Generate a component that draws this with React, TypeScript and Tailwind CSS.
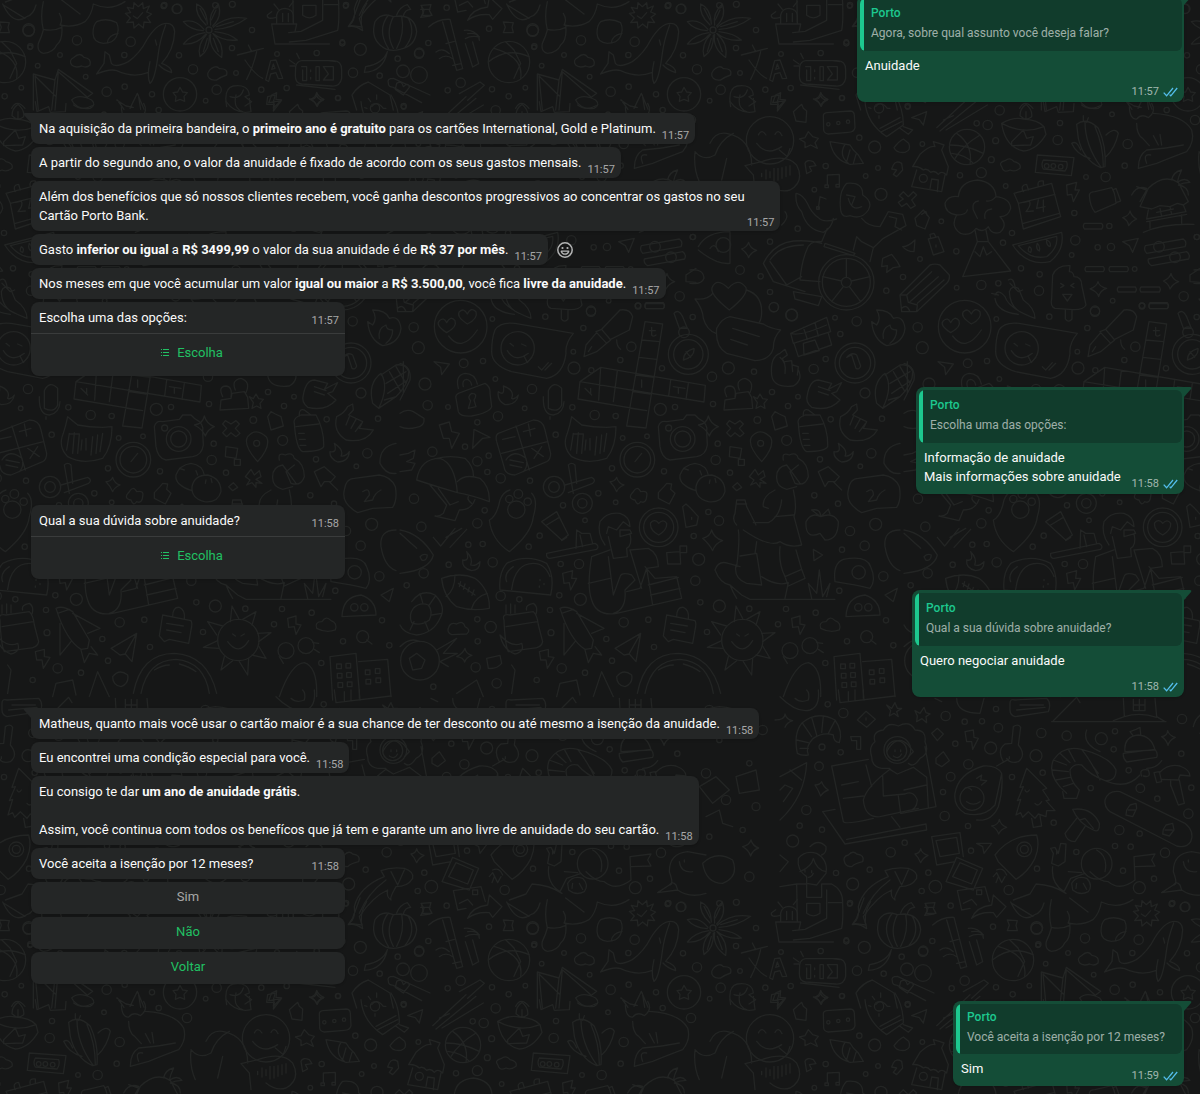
import type { ReactNode } from 'react'

// wallpaper drawings, each sheet is drawn at 3x and repeats every 504 x 898
type Sheet = { x: number; y: number; dots: number[][]; paths: string[] }

const SHEETS: Sheet[] = [
  {
    x: 0,
    y: 0,
    dots: [
      [86, 92, 17], [90, 142, 7], [180, 165, 7], [231, 121, 14], [113, 197, 7], [257, 230, 7], [64, 263, 7], [14, 289, 8],
      [320, 275, 14], [374, 260, 8], [373, 165, 8], [392, 125, 14], [491, 18, 8], [530, 27, 14], [537, 166, 8], [579, 208, 14],
      [456, 283, 8], [650, 269, 14], [617, 302, 7], [708, 219, 7], [696, 144, 8], [756, 90, 8], [697, 13, 9], [831, 162, 7],
      [784, 269, 8], [860, 264, 8], [950, 159, 8], [1037, 18, 7], [1027, 130, 8], [1081, 148, 18], [1059, 218, 14], [1014, 294, 8],
      [1193, 176, 8], [1139, 227, 8], [1257, 161, 14], [1211, 318, 8], [540, 283, 50], [1209, 214, 19], [1257, 225, 25],
      [15, 186, 62], [627, 90, 9],
    ],
    paths: [
      // body with sock
      'M130 5 Q120 50 130 90 Q125 110 115 130 Q110 155 130 160 Q160 158 170 135 Q190 120 185 75 M130 88 Q160 95 185 82 M178 40 Q190 60 180 75 Q220 85 255 65 Q275 45 280 12 Q330 35 375 5 M185 0 L240 42 M8 12 Q40 80 80 50 Q100 45 108 15 M10 15 L75 55',
      'M-47 186 Q10 140 75 170 M-30 145 Q60 170 50 235 M5 125 L30 150 L50 190 L30 235',
      // star badge
      'M376 40 L392 38 L382 22 L400 26 L402 8 L415 20 L428 8 L430 26 L448 18 L440 36 L455 42 L441 52 L452 68 L432 66 L430 84 L416 72 L402 84 L400 66 L380 68 L391 54 Z M400 48 L412 56 L428 38',
      'M290 65 Q320 52 350 68 Q360 90 348 112 Q340 130 310 130 Q280 128 279 100 Q279 75 290 65 M322 128 Q325 105 354 100',
      // whale
      'M290 222 L312 190 L315 155 L328 165 L334 190 Q345 205 385 185 Q420 160 440 120 Q470 70 500 70 Q522 70 524 95 Q522 150 485 190 Q515 200 515 218 Q490 210 477 195 M450 185 Q440 230 450 250 Q465 240 475 160 Q480 120 497 75 M290 222 Q330 205 350 212 Q400 235 443 218 M466 120 L470 135',
      'M215 195 Q205 180 222 172 Q240 155 252 172 Q275 175 270 195 Q260 205 245 198 Q225 205 215 195 Z M628 235 Q615 220 635 205 Q650 195 658 206 Q685 205 680 225 Q660 232 650 240 Q635 242 628 235 Z',
      // flower
      'M618 75 Q585 45 590 12 Q620 25 622 72 M632 75 Q625 40 655 12 Q668 50 638 78 M640 82 Q680 45 740 55 Q700 85 645 88 M645 95 Q690 100 712 120 Q670 125 638 100 M632 103 Q625 145 665 172 Q672 130 640 103 M620 103 Q590 135 600 170 Q630 150 628 105 M615 98 Q570 105 550 132 Q590 135 618 102 M612 88 Q585 55 550 65 Q570 90 610 92',
      'M600 25 L618 60 M648 30 L634 60 M700 65 L650 80 M610 155 L622 115 M655 155 L640 115',
      // cactus pot
      'M815 72 L825 132 L988 132 M815 72 H890 L885 95 M830 70 V45 Q835 25 855 25 Q878 28 880 45 V72 M848 40 V65 M865 40 V65 M828 52 Q800 60 802 45 L815 35 M822 12 L835 28 M880 5 L868 20',
      // bamboo
      'M1080 0 L1058 60 L1045 80 Q1065 75 1088 92 M1100 10 Q1075 50 1088 92',
      // pumpkin
      'M1180 50 Q1145 35 1125 65 Q1112 110 1140 135 Q1165 158 1200 148 Q1245 140 1250 95 Q1245 50 1200 48 Z M1165 45 Q1130 90 1165 145 M1180 50 Q1155 100 1180 145 M1205 48 Q1215 100 1190 145 M1225 55 Q1250 100 1215 142 M1190 45 Q1200 20 1222 14 L1232 28 Q1215 28 1210 48',
      'M1162 155 Q1150 190 1097 200 L1093 217 Q1150 215 1162 155 M1262 28 H1290 M1265 20 L1270 40 L1262 52 L1290 48',
      // books and sandwich
      'M100 330 V222 L165 240 L155 330 M115 330 L105 228 L168 290 M165 240 L175 208 L278 280 L262 292 L175 215 L165 330 M215 300 Q235 280 275 300 Q290 315 270 325 Q230 330 215 300 Z M35 325 Q50 295 75 325',
      'M350 300 L378 318 L400 322 M352 300 L372 328 M390 325 L412 280 L432 328 M415 285 L422 328',
      'M540 262 L548 276 L562 278 L552 289 L554 304 L540 298 L526 304 L528 289 L519 278 L533 276 Z',
      // language symbol
      'M712 165 L790 145 M745 135 L755 155 M770 155 Q760 200 740 238 M735 180 Q765 225 788 235 M797 240 L812 182 L828 180 L848 235 L835 236 L828 218 L812 222 L806 244 Z M815 208 L825 205 L820 192 Z',
      // alarm clock
      'M905 182 H1000 Q1025 182 1025 210 V235 Q1020 260 995 258 L905 252 Q885 250 886 225 L887 200 Q890 184 905 182 Z M890 255 L1005 268 M985 182 L1008 185 M868 180 L885 192 M890 160 L898 176 M870 198 H884 M905 200 H920 V242 H908 V210 M932 210 V215 M932 232 V237 M948 200 H958 V242 H948 Z M970 200 H1000 V240 H970 L985 222 Z',
      'M680 320 Q670 265 700 258 Q745 252 748 285 L735 290 L755 305 L735 318 M690 290 Q720 300 730 270 M815 285 L830 278 L828 298 L845 300 L820 325 L822 306 L806 308 Z',
      'M932 298 Q948 292 950 277 Q955 292 972 298 Q954 304 950 318 Q946 304 932 298 Z',
      'M1070 330 L1056 285 Q1075 255 1105 246 L1170 285 L1180 330 M1115 320 Q1130 300 1150 325 M1130 285 V298 M1105 295 L1112 305',
      'M1165 250 Q1160 235 1180 235 L1290 285 M1180 262 Q1165 262 1165 250 M1180 262 L1265 308 M1190 250 Q1205 240 1210 260 Q1225 245 1228 262 L1210 285 L1186 268 Z',
    ],
  },
  {
    x: 690,
    y: 95,
    dots: [
      [407, 213, 8], [564, 219, 7], [527, 243, 7], [373, 284, 7], [323, 401, 8], [508, 128, 8], [554, 156, 18], [697, 147, 7],
      [653, 36, 7], [456, 9, 7], [573, 298, 18], [754, 379, 7], [799, 469, 8], [690, 492, 7], [639, 546, 8], [589, 587, 8],
      [800, 578, 7], [874, 570, 14], [925, 565, 8], [993, 520, 8], [939, 443, 8], [966, 414, 8], [1156, 436, 14], [1145, 480, 7],
      [1153, 354, 8], [1188, 246, 7], [1247, 246, 14], [1304, 212, 8], [1313, 147, 14], [1430, 45, 8], [1266, 58, 7], [1110, 84, 8],
      [1103, 135, 14], [947, 273, 7], [874, 233, 15], [810, 241, 8], [904, 194, 9], [917, 137, 9], [893, 90, 14], [860, 85, 8],
      [929, 46, 14], [1049, 538, 8], [1047, 587, 14], [1258, 393, 8], [1223, 457, 8], [1263, 456, 11], [1334, 522, 7], [1268, 617, 7],
      [1481, 604, 14], [1356, 633, 9], [1215, 650, 14], [240, 440, 8], [212, 544, 8], [150, 525, 13], [8, 426, 8], [240, 591, 8],
      [251, 637, 14], [305, 660, 18], [1515, 75, 14], [1521, 426, 8], [240, 136, 71], [567, 40, 14], [831, 156, 53],
      [469, 562, 83], [469, 562, 72], [469, 562, 15], [700, 250, 12], [1070, 213, 7], [1090, 213, 7], [1112, 215, 7],
      [415, 88, 5], [445, 84, 5], [474, 80, 5], [1407, 455, 16], [1455, 487, 16], [100, 450, 22],
    ],
    paths: [
      'M400 62 Q400 55 410 53 L480 48 Q492 48 493 60 L495 98 Q492 112 475 112 L415 117 Q402 115 401 105 Z M310 50 L330 32 L335 28 L340 40 L350 48 L348 82 L318 78 Z M370 12 Q388 15 392 0 Q396 15 412 15 Q398 20 394 34 Q390 22 370 12 M245 5 L268 0 L262 20 L285 18 L262 48 L265 28 L242 28 Z M120 20 Q150 60 195 50 L190 10 M150 0 Q140 40 170 50',
      // laughing character
      'M205 120 Q215 100 228 120 M255 118 Q265 100 276 122 M200 145 Q230 185 275 155 M268 165 L292 185 L300 160 M15 170 Q40 200 75 180 Q90 135 130 115 M60 145 Q75 110 110 115 Q185 130 185 210 M15 172 Q10 220 28 260 M110 190 L95 255 M165 212 L215 200 Q290 175 320 210 Q345 260 300 285 Q270 295 240 270 M165 212 L190 240 L195 290 M215 235 V245 M228 225 V252 M240 230 V248 M252 220 V258 M264 220 V255 M276 218 V250 M288 215 V245 M300 212 V240',
      'M355 110 L368 125 L385 130 L375 143 L382 160 L362 150 L345 158 L345 142 L328 132 L345 128 Z M345 205 Q350 192 370 200 L378 212 L358 215 L365 228 L350 236 Z M610 210 Q618 195 635 205 L638 225 L620 245 L610 238 L620 225 L605 222 Z',
      // shell and rubber duck
      'M420 140 Q455 145 480 150 L490 165 L505 180 L520 205 L480 208 Q430 195 420 140 Z M465 148 Q445 180 475 205 M480 165 L470 200 M498 178 L490 205 M612 158 Q625 140 640 132 L656 145 Q665 165 645 172 Q620 175 612 158 Z',
      'M525 20 Q530 85 590 125 L640 90 Q640 40 615 0 M575 110 L635 80 M570 100 L630 68 M640 95 L668 105 L655 118 L630 100 M543 40 L536 38 M567 62 V70 M592 40 H600 M665 68 L710 50 L700 90 L688 74 Z M740 98 L840 5 M750 108 L870 10 M768 105 L892 30 M760 75 L790 62',
      // hut with bird
      'M668 215 L690 178 Q720 150 735 155 L730 140 L748 145 L762 150 L755 165 L775 215 L770 240 Q755 225 745 238 Q735 225 722 232 Q710 218 700 225 Q685 212 668 215 Z M680 225 L665 275 L755 290 L765 240 M720 280 L725 252 L745 255 L742 290',
      'M780 150 Q830 150 880 175 M800 115 Q850 150 840 208 M795 190 Q820 150 870 120 M785 175 Q830 180 850 205',
      'M935 215 Q925 202 945 197 Q960 185 972 200 Q995 205 990 220 Q975 232 960 225 Q940 235 935 215 Z M1042 180 L1152 188 L1144 242 L1036 232 Z M1060 195 L1130 200 Q1135 215 1125 228 L1060 222 Q1052 208 1060 195 Z',
      // bowl
      'M935 85 Q1000 120 1062 95 L1068 118 Q1040 165 1000 168 Q945 155 935 85 Z M935 85 Q970 65 1000 72 Q1045 75 1062 95 M990 62 Q990 40 1008 28 Q1028 45 1025 65 Q1008 80 990 62 M1008 70 V50 M965 140 L1000 105 L1010 130 L1030 125 L1022 150 L965 152 Z',
      // corn
      'M1160 88 Q1190 65 1225 100 Q1250 155 1245 215 L1232 218 Q1180 195 1165 130 Z M1185 80 Q1185 150 1232 215 M1215 95 Q1240 150 1240 215 M1145 145 Q1160 135 1172 165 M1145 145 Q1160 180 1200 190 M1248 120 Q1275 95 1285 115 Q1275 160 1248 185 M1180 62 V80 M1195 68 L1190 82 M1060 20 L1065 50 L1100 35 L1105 52 L1150 50 L1152 25 M1175 30 Q1200 50 1235 30',
      // hand with heart
      'M1318 35 Q1320 75 1340 72 Q1355 55 1375 68 Q1400 50 1385 25 M1390 55 Q1480 60 1505 105 Q1515 140 1490 170 Q1450 185 1400 205 L1345 220 Q1345 180 1370 165 Q1430 160 1480 150 M1340 85 Q1340 120 1358 130 L1378 152 M1390 122 L1405 150 M1410 118 L1415 150 M1370 205 Q1358 175 1382 180',
      // notes
      'M412 270 V240 L448 238 V268 M385 340 L390 305 L408 312 M405 270 h10 v8 h-10 z M438 268 h10 v8 h-10 z M380 335 h8 v8 h-8 z',
      // wheelchair racer
      'M320 295 Q340 300 352 325 Q365 355 385 368 Q400 385 440 372 M318 295 Q315 330 335 350 Q350 405 400 412 Q425 400 430 370 M452 345 Q445 290 470 265 Q520 260 518 300 Q550 320 535 345 Q515 375 480 362 Q455 370 452 345 M475 310 Q485 350 515 335 M470 300 L495 305 L485 330 M515 370 Q535 395 570 395 L595 350 L638 358 L648 392 L580 430 L550 458 L515 440 L500 425 L490 465 M598 365 L620 370 L615 395 L635 405 M405 445 L495 475 L490 482 L402 455 Z M412 400 L395 440 Q360 435 350 465 Q335 500 330 555 L390 560 M220 505 Q250 445 310 438 Q360 435 395 445 M240 495 Q270 450 340 450 M220 505 L250 560 L345 590 M240 500 L290 570 L335 545 M310 590 L395 605 L385 632 L315 612 Z M550 458 L540 500 M469 490 V547 M398 545 L455 558 M425 620 L460 575 M512 620 L478 575 M540 545 L484 558',
      'M640 290 L655 305 L670 290 L680 300 L665 315 L676 332 L662 340 L650 325 L635 335 L625 322 L640 312 L628 302 Z M675 370 L700 345 L718 368 L705 402 L680 392 Z M695 358 L708 350 L712 362 M638 455 Q655 455 675 435 L672 470 Q650 470 638 455 Z M715 432 L745 425 L762 470 L730 480 Z M722 430 L720 418 L732 415 L738 426 M738 450 V456',
      // tree and mountain
      'M800 360 Q765 355 765 325 Q775 300 805 305 Q810 260 862 255 Q915 262 918 305 Q960 310 962 340 Q955 365 930 365 Q955 390 930 412 Q905 420 895 395 Q880 415 858 400 Q840 425 812 415 Q780 395 800 360 Z M800 360 Q830 360 832 345 M918 305 Q905 320 890 318 M862 370 L850 345 Q845 320 865 318 M885 370 Q880 345 905 342 M855 405 L862 440 L818 545 L962 528 L895 440 L888 405 M862 440 H895 M855 470 L870 485 L880 455 L890 480 L905 470',
      // calendar
      'M972 295 L1085 265 L1112 365 L1000 402 L985 325 Z M985 325 L1095 298 M1000 385 L1108 355 M1000 290 Q990 270 1010 268 L1015 285 M1045 275 Q1040 255 1060 258 L1060 272 M1002 322 L1018 318 Q1025 330 1008 350 L1030 348 M1045 315 L1040 340 L1065 335 M1060 315 V350',
      'M1130 270 L1160 262 L1155 285 L1168 285 L1150 320 L1145 298 L1132 300 Z M1198 300 Q1200 290 1215 290 L1265 278 Q1275 290 1278 325 L1215 352 Q1200 335 1198 300 Z M1268 285 L1278 280 L1292 318 L1280 322 M1298 368 Q1318 362 1320 348 Q1325 365 1340 372 Q1325 378 1316 392 Q1314 376 1298 368 Z',
      'M1183 385 H1235 Q1242 393 1235 402 H1183 Q1177 393 1183 385 Z M1188 515 H1240 Q1246 522 1240 530 H1188 Q1182 522 1188 515 Z M1260 515 H1312 Q1318 522 1312 530 H1260 Q1254 522 1260 515 Z M1285 576 H1336 Q1342 583 1336 591 H1285 Q1279 583 1285 576 Z M1353 576 H1408 Q1414 583 1408 591 H1353 Q1347 583 1353 576 Z M1380 626 H1432 Q1438 633 1432 641 H1380 Q1374 633 1380 626 Z',
      // beach house
      'M1350 335 L1375 280 Q1420 235 1465 262 L1495 320 L1480 330 L1462 325 L1440 335 L1410 332 L1385 342 Z M1375 345 L1370 372 L1488 350 L1480 330 M1370 380 L1490 358 M1380 400 V380 M1475 385 V360 M1410 340 L1415 365 M1440 335 L1445 358 M1400 352 L1450 342 M1325 300 Q1340 270 1370 280 M1340 275 L1370 285 L1350 320 M1445 255 Q1450 230 1475 225 Q1465 245 1462 262 Q1485 245 1500 262 Q1480 262 1465 270 Q1495 275 1495 300 M1360 412 Q1420 385 1512 388',
      // melon
      'M968 450 L1115 412 Q1125 465 1080 500 Q1010 515 968 450 Z M985 452 L1100 424 Q1105 460 1070 485 Q1020 495 985 452 Z M1018 455 Q1028 460 1022 472 Q1010 470 1018 455 Z M1042 445 Q1052 455 1048 468 Q1036 462 1042 445 Z M1070 435 Q1085 442 1080 455 Q1068 450 1070 435 Z',
      'M1298 440 L1345 430 L1328 472 L1318 452 Z M1366 452 L1480 432 Q1492 440 1485 455 L1370 475 Q1360 465 1366 452 Z M1375 492 L1490 470 Q1502 478 1496 492 L1385 512 Q1372 505 1375 492 Z M1420 558 Q1440 550 1443 535 Q1448 555 1466 560 Q1448 566 1440 582 Q1436 566 1420 558 Z M1200 582 Q1220 575 1224 560 Q1228 576 1250 580 Q1230 586 1226 605 Q1222 590 1200 582 Z',
      // ice lolly
      'M1085 610 L1088 540 Q1100 510 1140 512 L1138 530 Q1150 530 1152 545 Q1175 545 1175 570 L1188 630 Q1180 645 1150 644 L1095 640 Q1080 635 1085 610 Z M1126 645 V672 Q1136 685 1146 672 V645 M1112 565 L1122 572 L1112 578 M1152 565 L1142 572 L1152 578 M1118 598 H1146 L1132 618 Z',
      // peppers
      'M915 600 Q925 580 945 605 Q955 640 1035 670 Q1035 640 1000 615 L985 580 Q965 570 958 590 Q960 640 1000 655 M915 610 Q920 650 985 658 M955 555 Q970 545 975 575 M960 565 L985 590 L998 585 M905 595 L925 600',
      // pencil
      'M635 650 L630 600 L720 510 Q735 505 750 510 L778 540 Q780 555 770 565 L680 650 Z M630 600 L650 600 L655 622 L682 630 L680 650 M650 600 L725 530 M682 625 L762 555 M660 620 L745 545 M635 640 Q650 625 660 650',
      'M578 490 L605 478 L622 500 L630 515 L610 518 L590 532 L592 512 L575 515 Z',
      // pizza and cake
      'M25 455 Q50 410 120 410 V505 Q80 510 25 465 M60 460 Q75 440 85 470 M155 462 Q170 458 176 442 Q180 460 200 466 Q182 472 176 488 Q170 472 155 462 Z M0 525 Q40 520 42 550 Q35 570 0 565 M285 350 Q300 365 275 390',
      // heart message
      'M15 612 Q55 615 68 595 M15 612 Q38 640 40 670 Q50 705 78 715 M170 585 Q215 600 215 650 Q215 670 208 682 M118 645 Q60 600 66 578 Q80 545 115 580 Q145 545 168 578 Q175 600 118 645 Z',
      'M1500 540 L1530 520 M1500 540 V560 L1530 562',
      // flame
      'M545 680 Q550 735 590 752 Q640 745 645 700 Q640 660 610 670 Q600 645 560 645 Q575 670 560 690 Z M580 730 Q575 700 600 690 Q600 705 620 705 Q620 730 600 745',
    ],
  },
  {
    x: 400,
    y: 300,
    dots: [
      [41, 82, 14], [55, 143, 18], [436, 50, 8], [277, 57, 7], [573, 32, 14], [550, 84, 8], [520, 155, 7], [522, 204, 18],
      [574, 211, 8], [661, 180, 8], [694, 140, 14], [786, 205, 8], [75, 252, 18], [191, 190, 13], [249, 183, 8], [286, 237, 7],
      [396, 267, 14], [374, 325, 7], [294, 349, 14], [144, 321, 7], [83, 316, 14], [232, 367, 8], [195, 440, 8], [97, 455, 14],
      [266, 467, 8], [232, 484, 14], [467, 404, 8], [517, 322, 8], [584, 345, 14], [647, 348, 8], [668, 414, 7], [741, 409, 7],
      [781, 328, 18], [825, 321, 8], [714, 17, 8], [878, 51, 8], [936, 230, 14], [939, 312, 8], [985, 204, 18], [1062, 215, 8],
      [1116, 276, 8], [1194, 290, 7], [1164, 318, 8], [1241, 207, 14], [1277, 177, 8], [1321, 102, 8], [1370, 64, 14], [1122, 21, 14],
      [1175, 45, 17], [1305, 53, 7], [1395, 279, 15], [1292, 358, 8], [1446, 356, 8], [1414, 460, 14], [1381, 499, 7], [1260, 478, 8],
      [1160, 421, 15], [1072, 360, 10], [953, 431, 8], [947, 480, 14], [792, 514, 8], [636, 505, 8], [595, 580, 8], [647, 607, 7],
      [489, 616, 8], [390, 542, 8], [302, 535, 14], [262, 516, 8], [254, 631, 8], [232, 670, 14], [42, 596, 14], [64, 680, 14],
      [419, 707, 8], [386, 740, 8], [555, 661, 7], [482, 792, 8], [537, 792, 14], [478, 886, 8], [541, 898, 18], [278, 787, 14],
      [248, 732, 8], [205, 734, 8], [146, 794, 8], [71, 820, 14], [20, 856, 8], [302, 888, 14], [358, 898, 8], [232, 958, 8],
      [272, 981, 17], [233, 1024, 8], [227, 1102, 14], [450, 930, 8], [453, 998, 9], [485, 1105, 14], [636, 1082, 8], [619, 1017, 8],
      [671, 967, 14], [745, 959, 8], [762, 1041, 8], [921, 996, 8], [901, 907, 8], [886, 842, 14], [958, 918, 18], [1048, 926, 8],
      [1134, 973, 8], [1158, 927, 8], [1247, 938, 8], [1318, 872, 8], [1394, 737, 14], [1326, 749, 8], [1350, 693, 14], [1427, 673, 18],
      [1314, 611, 8], [1243, 586, 8], [1450, 829, 14], [1341, 1024, 8], [1458, 961, 8], [1276, 1089, 8], [925, 636, 8], [957, 662, 14],
      [881, 708, 8], [896, 778, 18], [990, 518, 8], [1480, 1036, 8], [555, 1118, 8], [290, 1150, 14], [410, 1140, 8], [100, 1160, 8],
      [182, 80, 79], [353, 145, 50], [865, 163, 60], [865, 163, 44], [852, 97, 16], [1365, 189, 60], [1365, 189, 47], [848, 417, 37],
      [848, 417, 24], [806, 384, 9], [712, 479, 52], [712, 479, 40], [462, 561, 32], [462, 561, 16], [547, 610, 30], [547, 610, 14],
      [349, 629, 26], [328, 597, 11], [355, 582, 13], [383, 605, 11], [776, 682, 58], [776, 682, 45], [1027, 1020, 62], [1376, 817, 20],
      [1375, 922, 11], [1405, 922, 11], [1170, 1052, 24], [1230, 1037, 24], [1082, 430, 9], [1400, 1010, 18], [60, 1082, 58],
    ],
    paths: [
      'M140 98 Q105 75 118 62 Q132 50 140 68 Q152 45 165 62 Q172 80 140 98 Z M202 72 Q168 50 178 35 Q192 22 202 42 Q212 20 228 35 Q235 55 202 72 Z M146 108 Q185 160 232 90',
      // speech bubble
      'M285 90 Q300 65 345 70 L520 100 Q495 130 498 160 Q490 225 440 235 L335 215 Q275 195 275 155 Q275 115 285 90 Z M330 130 L340 138 M365 132 L378 138 M322 152 Q345 190 385 160 M372 168 L382 188 L395 172 M415 200 L425 210 L445 188 M435 210 L455 190',
      'M738 8 H790 Q797 18 790 26 H738 Q731 18 738 8 Z M552 170 L558 135 L590 98 L620 130 L590 155 Z M565 155 L575 140 M588 95 L605 88 L632 120 L620 130 M605 88 L660 30 Q690 25 698 50 L688 90 L632 118 M650 120 Q650 140 662 148',
      // crossword
      'M735 65 L788 72 L738 384 L680 378 Z M602 202 L596 300 M540 245 L912 306 L916 256 L602 202 Z M540 245 L534 297 L740 332 M652 212 L640 305 M725 120 L778 125 M717 172 L770 178 M708 225 L762 232 M700 275 L750 282 M692 325 L740 332 M812 240 L806 288 M865 250 L858 298 M755 82 V105 Q760 112 768 105 M748 92 H766 M555 265 L575 285 M572 265 V282 M820 260 L855 265 M835 265 V280 M725 240 V262',
      'M822 40 Q835 25 848 50 L862 85 L838 85 Z M850 180 Q850 155 882 145 Q885 170 850 180 Z M858 155 L872 172 M950 85 Q965 55 990 50 L1090 72 Q1110 85 1142 90 Q1120 110 1120 145 Q1110 180 1065 182 L980 160 Q945 140 950 85 Z M998 85 L1078 110 M992 118 L1042 135',
      // gift
      'M1172 100 L1280 52 L1292 95 L1180 130 Z M1182 130 L1195 170 L1295 135 L1285 100 M1210 82 L1222 118 M1245 68 L1255 108 M1210 130 L1245 120 L1258 152 L1212 165 Z M1172 100 Q1200 110 1280 75 M1355 165 L1368 205 Q1378 210 1382 198 L1370 165 Q1355 155 1340 172 Z',
      'M102 185 L148 192 L125 224 L122 202 Z M0 190 Q35 200 30 240 L0 300 M10 185 V280',
      // hands
      'M1115 225 Q1110 170 1140 160 L1155 148 L1162 165 L1148 175 M1140 172 Q1160 185 1155 220 M1155 185 L1175 182 L1178 215 M1178 195 L1195 200 L1192 225 M1195 210 Q1210 240 1180 258 Q1120 265 1115 225 M1222 285 Q1230 240 1255 240 L1295 250 L1285 268 L1310 255 L1325 248 L1310 275 L1295 280 L1320 300 Q1290 335 1235 322 Q1215 305 1222 285 M1255 260 L1290 272 M1255 275 L1285 285 M1322 350 Q1345 340 1355 320 L1370 312 L1372 330 L1358 345 L1400 365 L1390 385 L1432 390 Q1410 430 1350 420 Q1310 395 1322 350 M1360 350 L1350 375 M1380 358 L1365 385 M1395 372 L1378 395',
      // lock
      'M168 295 Q165 285 175 280 L255 250 Q272 260 270 280 L275 320 Q268 338 215 348 Q180 350 175 335 Z M175 265 Q165 225 195 220 Q225 220 232 252 M190 260 Q185 240 200 238 Q212 240 215 255 M215 280 Q200 290 212 302 L205 325 L228 320 L222 300 Q235 280 215 280 Z M310 258 Q345 270 335 295 Q345 300 355 285 Q350 315 315 314 Q290 300 295 275 Q315 290 310 258 Z M445 272 Q460 240 485 265 V315 Q475 340 445 325 Z M430 290 Q428 345 460 345 Q490 340 492 305 M450 350 V358',
      // podium
      'M972 330 L975 300 L1005 295 L1008 280 L1045 275 L1055 292 L1058 325 Z M980 290 Q965 260 990 258 Q1010 260 1005 290 M1018 270 Q1005 240 1035 235 Q1065 245 1050 278 M1060 290 L1072 296 L1080 282 L1088 296 L1102 298 L1092 310 L1095 325 L1082 318 L1068 325 L1072 308 Z',
      'M1430 310 Q1415 250 1455 220 Q1480 260 1448 325 Z M1455 225 L1500 195 Q1530 190 1538 215 Q1540 250 1500 290 L1448 325 M1480 215 L1515 275 M1500 200 L1530 250 M1470 250 L1530 215 M1475 280 L1535 240 M1465 300 L1500 290',
      'M0 340 Q20 325 40 335 L72 355 Q75 378 50 382 Q20 390 0 380 M118 375 L148 366 L155 395 L178 400 L155 445 L148 415 L130 415 Z M222 388 L270 412 L248 415 L218 445 Z M0 465 L25 460 L45 450 L40 475 L20 485 L45 490 L35 510 L0 515',
      // calculator
      'M295 400 L400 360 Q430 360 435 390 L452 460 Q452 480 440 485 L345 525 Q315 525 312 500 L290 425 Q285 405 295 400 Z M348 378 L388 510 M305 460 L442 425 M308 418 L345 410 M370 395 L405 385 M385 372 L392 408 M395 445 L430 470 M425 440 L402 475 M330 480 L370 488 M330 495 L365 502 M318 480 Q340 445 378 475 Q385 500 370 515',
      // cat mug
      'M515 350 L545 375 Q580 382 620 382 L648 380 Q648 440 620 475 Q560 495 515 470 Q485 440 502 400 Q510 375 515 350 Z M520 400 L512 450 M535 398 L530 460 M522 402 H550 L545 460 M558 420 L555 450 M570 415 V450 M590 410 L585 465 M605 405 L600 460 M620 400 L612 455 M705 485 L725 460',
      'M775 380 Q780 360 800 365 L850 358 L860 345 L885 345 L895 355 Q925 370 920 395 L922 435 Q918 465 890 470 L810 480 Q785 475 780 440 Z M895 375 Q920 372 925 348 Q932 372 955 380 Q935 388 928 408 Q920 388 895 375 Z M988 362 L1005 372 L1020 362 L1030 372 L1018 385 L1032 400 L1020 410 L1005 398 L992 410 L980 398 L992 385 L980 372 Z',
      'M1115 350 L1125 335 L1138 342 L1155 350 L1162 378 L1125 390 Z M990 440 L1025 445 L1020 475 L988 470 Z M1015 478 h18 v18 h-18 z M1085 485 Q1040 435 1055 410 Q1080 380 1112 412 Q1125 440 1085 485 Z M1195 370 Q1190 355 1215 345 L1260 345 Q1285 390 1283 440 Q1275 455 1220 455 Q1200 445 1195 370 Z M1210 348 Q1208 325 1225 330 L1245 345 M1200 380 L1268 372 M1208 400 H1225 M1210 418 H1228 M1212 436 H1230 M1315 430 Q1345 450 1335 468 Q1350 470 1360 455 Q1358 485 1325 486 Q1300 475 1302 455 Q1325 460 1315 430 Z',
      // mushrooms
      'M50 540 Q60 475 120 475 Q165 490 172 578 Q110 560 50 540 Z M110 475 Q150 465 195 475 Q222 500 220 530 M172 545 Q195 520 240 535 Q270 560 268 605 Q215 585 172 578 M90 555 L140 615 L130 640 Q120 650 105 648 L165 662 L178 630 Q215 630 225 598 M115 565 L150 615 L175 605 M215 610 Q200 600 205 590',
      'M505 495 Q515 485 525 495 L530 550 M505 495 L520 580 M495 555 L575 532 Q590 540 578 550 L505 578 M630 545 Q645 545 650 532 Q655 550 672 555 Q655 562 650 575 Q645 560 630 545 Z M700 575 Q712 555 722 575 Q745 570 740 590 Q738 612 722 605 Q712 620 705 600 Q680 595 700 575 Z M775 578 L792 560 L800 550 L815 552 L812 568 L825 580 L808 612 L775 595 Z',
      'M888 572 Q835 555 840 525 Q850 495 885 490 Q920 495 925 525 M888 560 Q895 525 935 525 Q975 535 975 575 Q965 610 925 605 Q885 595 888 560 Z M905 525 L900 512 M930 540 L928 550 M945 535 L948 548 M850 505 L865 510',
      // shield
      'M300 600 Q310 575 330 570 M395 580 Q415 600 400 650 Q395 700 328 755 Q275 720 268 660 Q290 650 300 600 M425 665 L470 635 L505 705 L485 720 Z M440 675 L478 652 M485 722 L500 712 M100 712 L122 738 L165 685 M138 712 L185 685 M150 742 L200 688',
      // toothbrush
      'M440 760 L585 730 Q600 738 590 748 L450 775 Q438 775 440 760 Z M528 745 L530 690 L545 700 L570 700 L578 730 M540 705 L548 740',
      // person with heart
      'M615 735 Q590 700 600 665 Q620 635 660 640 Q690 650 690 680 L670 665 L650 690 L625 680 L620 700 M660 690 H690 L695 700 L660 710 Z M690 700 Q698 735 680 745 L682 770 L640 775 L625 710 M690 750 L745 745 Q775 760 775 800 L740 805 L720 865 L680 875 M690 750 L725 865 M575 770 L630 750 M575 770 Q560 860 575 900 Q590 950 650 940 L845 895 L830 830 L765 835 L735 800 M625 770 L640 885 L660 830 Q665 815 695 825 L705 840 L675 870 Q680 930 640 940 M565 850 L630 835 M745 855 L835 832 M752 885 L840 865 M740 805 L758 915',
      'M776 705 Q748 690 752 668 Q765 655 776 670 Q790 655 800 670 Q802 690 776 705 Z M848 620 L858 612 L872 625 L895 650 L890 675 L858 682 Z M875 652 V658 M800 758 L840 755 L842 792 L803 792 Z M840 738 h20 v20 h-20 z M908 715 Q930 710 935 690 Q942 715 968 722 Q945 730 938 752 Q930 735 908 715 Z',
      // hiker with dog
      'M1130 530 Q1130 500 1160 495 L1200 550 M1130 530 Q1128 560 1160 568 L1190 560 M1150 480 Q1145 455 1168 465 Q1190 455 1195 475 Q1225 490 1225 530 Q1215 560 1185 550 L1170 515 L1195 495 M1125 570 Q1085 590 1090 620 L1105 625 M1145 600 Q1140 650 1105 668 L1060 668 M1180 570 Q1192 620 1182 650 L1205 735 Q1170 745 1140 725 Q1110 745 1030 690 M1125 650 L1180 645 M1010 675 Q995 660 1005 640 L1010 600 L1035 600 L1040 620 L1068 675 M1010 612 H1040 M1015 690 Q1020 720 1010 800 M1070 725 L1065 760 M1020 768 L1070 760 L1085 855 L1040 850 Q1000 835 1008 795 M1140 740 Q1135 790 1155 830 L1205 808 L1188 750 M1155 830 L1165 858 L1215 835 L1205 808 M945 810 Q955 780 985 790 L1020 800 M945 810 Q960 850 990 855 L1025 885 L1050 898 H1305 M1085 830 Q1130 860 1165 848 L1155 895 M990 855 Q1000 880 1010 895 M1235 895 L1225 850 L1250 880 L1258 810 L1268 890 L1290 850 L1280 890',
      'M1260 700 Q1215 720 1218 665 Q1235 635 1262 650 Q1300 635 1315 665 Q1315 720 1275 720 Z M1262 650 L1235 630 Q1262 625 1262 650 L1285 628 L1290 642 M1052 525 L1065 508 L1075 525 L1090 512 L1095 530 L1080 538 L1098 550 L1080 548 L1080 562 L1068 548 L1052 555 L1062 540 L1048 530 Z M1255 515 L1285 500 L1318 530 L1305 545 L1285 545 L1275 560 Z M1300 545 L1325 570 M998 560 L1012 548 L1025 562 L1010 572 Z',
      'M1345 570 Q1350 535 1375 535 L1450 525 Q1485 530 1498 560 Q1505 600 1490 622 L1430 625 L1385 638 Q1335 610 1345 570 M1400 575 Q1420 560 1420 585 L1405 605 L1430 600 Q1435 580 1455 570',
      // bird, ball, taco
      'M0 690 Q60 700 100 765 Q90 810 0 820 M60 770 Q70 760 82 765 Q80 785 65 780 Z M0 700 L50 745 M200 755 Q220 775 212 795 Q225 800 240 785 Q240 810 215 812 Q185 805 188 780 Q210 785 200 755 Z',
      'M125 835 Q180 815 225 835 Q270 870 268 925 Q215 935 170 920 Q130 890 125 835 Z M138 890 Q165 870 165 825 M215 925 Q225 890 262 880 M175 850 L225 885 M182 845 L178 860 M195 852 L190 868 M208 862 L204 876 M222 870 L216 886 M300 870 Q295 820 320 790 Q380 760 440 790 Q465 830 452 885 Z M335 868 Q345 790 400 790 Q435 790 450 830 M320 845 Q310 820 340 800 M420 838 v4 M432 850 v4 M418 858 v4 M488 820 L518 812 L515 835 L530 835 L512 870 L508 848 L492 850 Z',
      // life ring
      'M35 905 Q65 865 105 885 Q140 920 120 955 Q100 1000 50 1005 Q10 1000 0 975 M40 925 Q60 905 85 915 Q100 935 88 960 Q60 980 35 968 Q25 945 40 925 Z M60 880 L68 908 M105 890 L88 915 M125 940 L95 945 M85 990 L75 965 M30 990 L42 965',
      'M145 985 Q150 965 170 972 Q190 960 195 980 Q215 990 200 1002 L155 1004 Q140 998 145 985 Z M170 1070 Q190 1060 195 1045 Q198 1062 216 1066 Q198 1072 194 1086 Q190 1072 170 1070 Z M260 1075 L300 1066 L305 1090 Q290 1108 265 1105 Z M110 1050 L170 1015 L130 1060 L172 1060 L120 1085 L145 1100 M28 1075 L50 1060 L75 1080 L65 1105 L38 1110 Z M0 1040 Q30 1010 60 1025',
      // robot suitcase
      'M312 960 Q305 940 330 945 L400 935 Q412 945 415 975 L428 1025 Q425 1045 395 1045 L325 1055 Q315 1035 312 960 Z M318 980 L412 965 M318 915 V940 M332 912 V940 M345 915 V938 M380 930 Q375 915 400 910 Q415 920 408 942 M300 1005 Q310 1050 345 1062 Q375 1055 365 1030 Q335 1045 300 1005',
      // rocket
      'M480 925 Q500 915 530 935 L580 1020 L575 1045 L555 1048 Q510 1020 480 925 Z M485 940 L520 928 M530 940 L612 985 L575 1000 M492 970 L492 1065 L525 1025 M555 1050 L565 1088 L580 1060 L605 1065 L585 1040 M418 1055 L445 1048 L445 1070 L462 1072 L442 1105 L438 1080 L422 1080 Z M645 1045 L722 1000 L708 1085 L688 1062 L672 1065 Z M722 1000 L688 1060',
      // portal
      'M800 945 L885 962 Q890 970 885 990 L878 1030 L820 1018 L805 1025 L790 1008 Z M830 950 Q830 920 850 922 Q868 930 865 955 M812 970 L862 978 M812 990 L855 998 M712 1180 Q735 1060 835 1060 Q935 1065 962 1180 M735 1180 Q755 1080 840 1078 Q925 1085 940 1180 M775 1110 Q800 1095 820 1095 M850 1092 Q880 1100 900 1115',
      // sun
      'M1003 965 L1008 918 L1028 955 M1040 958 L1080 935 L1068 975 M1085 1000 L1125 998 L1088 1025 M1088 1038 L1110 1075 L1068 1065 M1058 1075 L1055 1125 L1030 1085 M1010 1082 L975 1110 L985 1070 M968 1045 L922 1042 L965 1022 M962 1005 L935 965 L980 978 M1010 1002 L1018 1008 M1035 1008 L1045 1002 M995 1025 Q1028 1070 1058 1022',
      'M1175 955 L1200 948 L1200 972 L1215 975 L1200 1003 L1195 980 L1178 982 Z M1262 985 Q1255 965 1278 965 Q1290 945 1305 962 Q1325 968 1318 990 Q1290 1000 1262 985 Z M1150 1070 L1162 1090 M1250 1028 L1268 1030 M1255 1048 L1270 1058 M1412 1020 L1428 1032 M1305 845 Q1298 790 1330 778 Q1400 765 1412 800 Q1430 840 1410 865 Q1370 855 1305 845 M1338 950 Q1340 890 1395 885 Q1440 900 1440 945 Z M1240 748 L1268 765 L1242 782 Z M1455 885 L1492 865 L1480 905 Z',
      // buildings
      'M1310 1200 L1302 1070 L1380 1060 L1392 1200 M1388 1085 L1475 1078 L1485 1190 M1322 1092 h14 v14 h-14 z M1350 1090 h14 v14 h-14 z M1324 1120 h14 v14 h-14 z M1352 1118 h14 v14 h-14 z M1326 1148 h14 v14 h-14 z M1354 1146 h14 v14 h-14 z M1408 1110 h14 v14 h-14 z M1438 1106 h14 v14 h-14 z M1410 1138 h14 v14 h-14 z M1440 1134 h14 v14 h-14 z M1150 1190 Q1185 1090 1225 1088 Q1265 1100 1262 1190 M1500 430 Q1450 440 1452 490 Q1470 525 1500 520 M1500 690 Q1450 690 1455 740 Q1465 800 1500 812',
      'M580 1190 L605 1115 L640 1190 M650 1130 Q670 1105 695 1125 Q700 1150 675 1160 Q650 1155 650 1130 M335 1180 L345 1110 L335 1095 M470 1190 L480 1150 L530 1140 L540 1185 M170 1180 L230 1140 L250 1190',
    ],
  },
  {
    x: 780,
    y: 690,
    dots: [
      [190, 69, 14], [143, 43, 8], [126, 171, 9], [182, 187, 8], [117, 229, 13], [79, 360, 14], [59, 407, 8], [126, 419, 8],
      [38, 453, 18], [168, 549, 8], [218, 582, 18], [210, 639, 8], [269, 539, 8], [332, 487, 14], [374, 458, 8], [445, 548, 8],
      [425, 603, 8], [199, 750, 7], [512, 647, 8], [494, 378, 14], [564, 408, 8], [489, 306, 8], [512, 260, 13], [565, 223, 14],
      [526, 161, 8], [497, 78, 14], [554, 95, 8], [606, 94, 8], [648, 57, 8], [655, 113, 13], [632, 174, 18], [696, 261, 8],
      [768, 197, 18], [788, 248, 8], [784, 129, 14], [860, 137, 14], [964, 146, 18], [1005, 124, 8], [1001, 178, 8], [932, 294, 8],
      [1046, 241, 8], [1081, 295, 13], [1132, 326, 8], [1018, 420, 14], [1079, 431, 8], [1005, 468, 8], [1052, 470, 8], [1155, 488, 14],
      [1122, 566, 8], [1029, 542, 8], [889, 486, 8], [821, 398, 8], [771, 536, 8], [573, 482, 8], [686, 600, 14], [639, 710, 8],
      [770, 713, 18], [775, 763, 8], [1177, 639, 8], [1216, 650, 14], [1204, 191, 8], [1206, 87, 14], [1225, 371, 14], [1234, 293, 8],
      [457, 753, 8], [430, 782, 14], [466, 590, 19], [1078, 593, 18], [515, 895, 8], [554, 872, 14], [648, 892, 8],
      [733, 478, 22], [733, 478, 12], [950, 521, 46], [576, 325, 36], [1300, 60, 14], [1330, 150, 8], [1290, 250, 14], [1420, 220, 8],
      [1350, 330, 14], [1400, 420, 8], [1300, 440, 8], [1440, 350, 12], [1380, 100, 8], [1460, 120, 14], [1420, 560, 14], [1330, 640, 8],
      [352, 180, 40], [350, 182, 30],
    ],
    paths: [
      'M0 20 Q50 70 90 60 Q120 50 115 0 M45 25 Q60 40 85 30 Q90 10 80 0 M175 0 L180 38 L345 18 M205 5 V32 M225 0 V30 M250 0 V25 M320 45 L335 55 L345 38 L352 55 L365 55 L350 65 L355 80 L342 70 L328 78 L332 62 Z M405 62 L420 70 L432 52 L438 68 L450 72 L438 80 L440 98 L426 86 L410 95 L412 78 Z M232 90 L258 64 L286 88 L260 112 Z M258 84 v6 M-15 90 Q15 90 15 72 Q20 90 38 92 Q20 98 15 112',
      // croissant
      'M52 190 Q40 130 65 100 Q110 60 165 90 Q190 125 178 158 Q160 155 160 135 Q130 125 100 145 Q75 170 85 195 Q65 198 52 190 M68 100 L95 140 M95 82 L110 135 M130 78 L125 128 M165 92 L145 130 M50 150 L85 158 M60 175 L85 175 M212 140 H242 V178 L230 178 V152 L215 152 Z',
      'M0 260 L80 218 Q75 320 0 390 M30 240 L65 270 M0 300 L15 285 L38 295 L10 335 M105 285 Q120 285 125 275 Q130 290 145 300 Q130 305 122 318 Q115 300 105 285 Z',
      // laptop caller
      'M275 200 Q265 170 285 155 Q275 125 310 120 Q325 95 355 108 Q390 90 405 120 Q440 120 435 155 Q450 190 420 205 Q400 235 385 220 M275 200 Q275 230 305 235 L330 235 M320 185 Q350 130 385 165 L400 185 L385 200 M345 180 v5 M362 180 v5 M340 198 Q355 210 365 192 M155 228 L265 208 M435 170 L468 350 L365 370 M155 228 L190 395 Q195 405 280 385 M330 238 L352 252 L400 232 L440 262 L445 352 M330 238 Q260 290 250 330 Q255 385 300 380 L415 355 M308 255 L310 318 L375 312 M372 300 L440 285 M375 312 Q400 300 412 330 Q410 360 385 362 M355 318 L362 370 M258 225 L275 290 M185 285 L235 275 M190 325 L250 318 M128 365 L165 358 M128 365 L195 462 L440 420 L438 402 L200 448 M335 380 L360 412',
      'M455 130 L472 115 L490 132 L472 152 Z M468 205 L490 185 L508 212 L485 230 L468 220 Z M555 125 L580 120 L582 142 L595 145 L578 178 L575 155 L560 155 Z M530 25 Q530 70 600 70 L612 25 M465 25 L485 35 M690 40 Q690 25 705 30 L800 25 Q815 40 805 65 L705 80 Q690 75 690 60 Z M720 45 H790 M710 60 L795 52 M815 95 H1158 M820 92 L890 22 L900 38 M1030 25 L1033 80 L1000 92 M1125 25 L1130 80 L1155 95 M1060 28 V62 H1095 V28 M1078 28 V62 M1060 45 H1095 M1033 80 Q1080 65 1130 82',
      // eggplant pan
      'M525 310 Q535 250 610 228 Q650 225 665 250 Q655 300 645 345 Q610 385 555 370 Q520 350 525 310 Z M665 250 Q670 300 655 350 Q635 395 590 390 M650 228 L685 208 M670 215 Q650 180 675 162 L695 160 L700 110 Q715 100 722 112 L715 165 Q740 195 715 215 Q690 222 680 205 M688 200 v6 M590 265 L605 255 L602 270 L620 272 L605 285 M550 300 Q560 285 575 300 M560 335 Q580 350 600 335',
      // pine tree
      'M740 235 L800 295 L788 300 L808 330 L798 332 L825 362 L800 362 L798 380 L775 372 L765 385 L745 365 L728 382 L722 368 L708 375 L722 328 L712 332 L730 290 L720 292 Z M755 385 L760 412 L785 408 L780 378 M735 300 Q740 312 748 300 M765 340 Q775 352 785 335',
      // shrimp, snake
      'M860 310 Q800 260 820 210 Q850 165 905 178 Q935 215 960 270 M905 178 Q990 200 1008 240 Q1008 275 975 272 Q930 255 905 225 Q880 220 870 240 Q870 265 885 285 L898 300 L890 325 L852 325 L848 305 M820 210 L860 225 M840 190 L870 218 M865 178 L885 215 M818 240 L865 245 M828 270 L870 262 M850 290 L880 280 M920 120 Q905 160 960 185 M940 230 L955 250 M975 272 Q1040 300 1080 255 M635 408 Q655 405 658 388 Q662 405 680 412 Q662 418 656 432 Q650 415 635 408 Z',
      // hat and hammer
      'M1035 185 Q1030 140 1075 135 Q1115 138 1125 180 Z M1030 190 L1125 178 Q1135 190 1130 202 L1040 216 Q1028 205 1030 190 M1060 138 L1050 125 L1068 118 L1080 112 L1082 132 M1145 140 Q1162 138 1163 122 Q1168 138 1186 142 Q1168 150 1164 166 Q1160 150 1145 140 Z M1085 258 Q1075 235 1105 240 Q1115 265 1090 258 M1100 235 Q1130 235 1145 212 M1122 248 L1138 245 L1145 275 L1130 278 Z M1138 248 Q1165 220 1200 228 Q1230 240 1230 258 L1200 255 L1195 270 L1145 268 M1172 285 L1195 345 L1213 340 L1198 270 M1172 270 V288',
      // skateboard
      'M975 330 Q985 300 1020 305 L1215 400 Q1245 425 1232 455 Q1220 475 1190 468 L990 365 Q972 350 975 330 Z M1050 345 L1068 340 L1070 355 L1058 380 L1038 375 L1040 360 Z M1158 405 L1178 400 L1182 420 L1168 438 L1148 432 L1150 418 Z M1045 360 h20 M1155 420 h22',
      // mushroom, photos
      'M878 358 Q935 350 958 400 Q960 430 940 420 Q895 400 878 358 Z M890 385 L855 430 Q860 455 885 455 L915 410 M900 390 L915 385 L940 415 M455 440 L540 428 L550 500 M455 440 L470 525 L525 515 M468 452 L530 442 L538 490 L480 500 Z M530 502 L608 535 L580 600 L498 575 Z M540 518 L592 540 L575 582 L518 560 Z M590 460 L635 460 L612 490 L608 470 Z M405 492 Q420 490 422 476 Q426 492 444 496 Q428 504 422 518 Q416 502 405 492 Z M532 602 L615 590 L628 635 M532 602 L545 660 L570 655 M550 640 L575 628 L590 645 M590 600 h15 v14 h-15 z M575 685 Q590 650 635 645 L640 615 L678 650 L650 682 L640 668 Q600 665 575 685 Z',
      // rocket
      'M645 495 Q690 435 770 435 Q780 470 765 505 Q745 545 708 568 L655 515 Z M655 515 L708 568 M650 540 Q670 530 680 555 M640 560 L650 548 L665 578 L675 560 M648 578 L655 560',
      // astronaut
      'M820 490 L812 475 L825 472 L835 490 L842 460 L858 462 L855 515 L835 528 L815 520 Z M830 480 v12 M818 530 Q812 580 852 605 L872 565 L915 550 M865 545 L905 548 M875 580 Q890 555 920 565 Q940 585 925 605 Q900 618 878 600 Z M890 580 L888 595 M910 580 L920 598 M950 480 Q985 500 975 545 M930 545 Q960 575 985 575 Q1020 605 1065 570 L1062 500 L1125 492 L1115 510 L1125 528 L1065 530 M858 610 Q820 585 768 582 L750 612 L700 630',
      'M1180 545 Q1180 490 1235 485 L1290 495 M1180 545 Q1195 585 1180 585 L1145 608 L1205 600 M1180 585 Q1190 572 1200 585 L1205 600 Q1240 625 1290 610 M1210 515 Q1215 550 1250 545 M1225 510 v6',
      // barista
      'M80 560 Q50 540 55 505 Q75 480 110 490 Q145 510 138 550 L110 585 L80 580 Z M90 470 Q115 445 138 470 Q140 490 125 495 M60 545 Q95 530 100 505 Q110 540 138 545 M75 540 v6 M95 542 v6 M85 562 Q95 562 100 550 M50 582 H80 V622 H125 V582 L155 582 Q190 600 188 640 Q190 690 185 715 L90 745 L40 750 M50 582 L52 690 M0 590 L50 582 M80 640 H120 V670 Q100 685 80 670 Z M140 600 V685 L75 718 L38 722 M145 638 H188 M0 495 L25 515 L0 545 M195 520 Q185 500 205 495 Q220 480 230 492 Q255 495 248 515 Q225 520 215 530 Q200 530 195 520 Z',
      // dolphin
      'M315 542 Q345 530 385 535 Q415 545 410 565 Q395 590 360 590 Q340 625 345 630 Q330 620 335 600 Q290 620 250 680 L258 705 L220 700 Q240 685 235 650 Q250 590 325 560 Z M345 545 L365 585 L385 540 M250 670 Q275 610 330 570 M435 640 L465 638 L460 655 L468 670 L438 670 L444 655 Z',
      // bamboo
      'M458 705 Q485 680 522 682 L560 830 L542 835 L500 690 M510 755 L535 748 M530 820 L555 815 M568 755 L590 825 L608 815 L590 750 M565 715 Q590 710 610 735 Q585 730 568 740 M575 725 Q610 720 610 745 M480 780 Q500 765 520 785 M490 800 Q510 785 530 800 M682 690 L712 692 L708 706 L712 722 L682 722 L688 706 Z M550 905 L612 870 L625 880 L575 925',
      'M1240 110 Q1250 60 1330 50 Q1420 55 1440 130 M1260 130 Q1290 80 1340 75 M1270 290 L1320 260 L1360 300 L1310 340 Z M1380 260 L1440 240 L1450 300 L1390 310 Z M1280 520 Q1320 480 1370 510 Q1390 560 1340 580 Q1290 580 1280 520 Z M1290 380 L1330 360 L1340 400 L1370 410 M1400 470 Q1420 465 1425 450 Q1430 468 1448 474 Q1430 480 1424 498 Q1418 480 1400 470 Z',
    ],
  },
]

function Wallpaper() {
  return (
    <svg className="absolute inset-0 h-full w-full text-[#232524]" aria-hidden="true">
      <defs>
        <g id="doodles" fill="none" stroke="currentColor" strokeWidth="4" strokeLinecap="round" strokeLinejoin="round">
          {SHEETS.map((s) => (
            <g key={`${s.x}-${s.y}`} transform={`translate(${s.x} ${s.y}) scale(0.33333)`}>
              {s.dots.map(([cx, cy, r], i) => (
                <circle key={i} cx={cx} cy={cy} r={r} />
              ))}
              {s.paths.map((d, i) => (
                <path key={i} d={d} />
              ))}
            </g>
          ))}
        </g>
      </defs>
      {[-1008, -504, 0, 504, 1008].map((x) =>
        [-898, 0, 898].map((y) => <use key={`${x}.${y}`} href="#doodles" x={x} y={y} />),
      )}
    </svg>
  )
}

function Checks() {
  return (
    <svg width="15" height="10" viewBox="0 0 15 10" fill="none" stroke="#53bdeb" strokeWidth="1.3" className="ml-1 inline-block" aria-hidden="true">
      <path d="M0.7 5.6 L3.6 8.8 L10 1" />
      <path d="M6.6 7.6 L7.8 8.8 L14.2 1" />
    </svg>
  )
}

function Time({ children, read, className = 'mt-[9px]' }: { children: string; read?: boolean; className?: string }) {
  return (
    <span className={`float-right ml-1.5 text-[11px] leading-[15px] whitespace-nowrap text-white/60 ${className}`}>
      {children}
      {read && <Checks />}
    </span>
  )
}

function Tail({ className }: { className: string }) {
  return (
    <svg width="8" height="12" viewBox="0 0 8 12" className={`absolute top-0 ${className}`} aria-hidden="true">
      <path d="M0 0 H6 Q8 0 7 2 L0 10 Z" fill="currentColor" />
    </svg>
  )
}

function Incoming({ children, time, tail }: { children: ReactNode; time: string; tail?: boolean }) {
  return (
    <div className={`relative flow-root w-fit max-w-[65%] rounded-lg bg-[#242626] pt-1.5 pr-1.5 pb-px pl-2 shadow-sm ${tail ? 'rounded-tl-none' : ''}`}>
      {tail && <Tail className="right-full -scale-x-100 text-[#242626]" />}
      {children}
      <Time>{time}</Time>
    </div>
  )
}

function ListMessage({ text, time }: { text: string; time: string }) {
  return (
    <div className="w-[314px] rounded-lg bg-[#242626] shadow-sm">
      <div className="flow-root pt-1.5 pr-1.5 pb-[5px] pl-2">
        {text}
        <Time className="mt-[5px]">{time}</Time>
      </div>
      <button className="flex h-[43px] w-full items-center justify-center gap-2 border-t border-white/10 pb-1.5 pl-2 text-[#21c063]">
        <svg width="8" height="8" viewBox="0 0 8 8" stroke="currentColor" strokeWidth="1" aria-hidden="true">
          <path d="M0 1.5 H1 M2 1.5 H8 M0 4.5 H1 M2 4.5 H8 M0 7.5 H1 M2 7.5 H8" />
        </svg>
        Escolha
      </button>
    </div>
  )
}

type OutgoingProps = {
  quote: string
  time: string
  width: string
  stacked?: boolean
  quoteSize?: string
  className?: string
  children: ReactNode
}

function Outgoing({ quote, time, width, stacked, quoteSize = 'h-[53px] pt-[5px]', className = '', children }: OutgoingProps) {
  return (
    <div className={`relative self-end rounded-lg rounded-tr-none bg-[#144d37] py-[3px] shadow-sm ${width} ${className}`}>
      <Tail className="left-full text-[#144d37]" />
      <div className="mr-0.5 ml-[3px] flex overflow-hidden rounded-md bg-[#113c2c] text-xs">
        <span className="w-1 shrink-0 bg-[#1dc88f]" />
        <div className={`pl-[7px] ${quoteSize}`}>
          <p className="leading-5 font-medium text-[#1dc88f]">Porto</p>
          <p className="leading-5 text-white/60">{quote}</p>
        </div>
      </div>
      <div className="flow-root pt-[5px] pr-1.5 pl-2">
        {stacked ? <p>{children}</p> : children}
        <Time read>{time}</Time>
      </div>
    </div>
  )
}

export default function App() {
  return (
    <main className="relative min-h-screen overflow-hidden bg-[#161717] font-[Roboto,sans-serif] text-[13px] leading-[19px] text-[#fafafa]">
      <Wallpaper />

      <div className="relative flex flex-col gap-[11px] pr-4 pb-2 pl-[31px]">
        <Outgoing quote="Agora, sobre qual assunto você deseja falar?" time="11:57" width="w-[327px]" stacked className="-mt-[5px]">
          Anuidade
        </Outgoing>

        <div className="flex flex-col gap-[3px]">
          <Incoming time="11:57" tail>
            Na aquisição da primeira bandeira, o <b>primeiro ano é gratuito</b> para os cartões International, Gold e Platinum.
          </Incoming>
          <Incoming time="11:57">
            A partir do segundo ano, o valor da anuidade é fixado de acordo com os seus gastos mensais.
          </Incoming>
          <Incoming time="11:57">
            Além dos benefícios que só nossos clientes recebem, você ganha descontos progressivos ao concentrar os gastos no seu
            Cartão Porto Bank.
          </Incoming>
          <div className="flex items-center">
            <Incoming time="11:57">
              Gasto <b>inferior ou igual</b> a <b>R$ 3499,99</b> o valor da sua anuidade é de <b>R$ 37 por mês</b>.
            </Incoming>
            <button aria-label="Reagir" className="ml-2 text-[#b4b5b5]">
              <svg width="18" height="18" viewBox="0 0 18 18" fill="none" stroke="currentColor" strokeWidth="1.5">
                <circle cx="9" cy="9" r="7.2" />
                <circle cx="6.5" cy="7" r="1.1" fill="currentColor" stroke="none" />
                <circle cx="11.5" cy="7" r="1.1" fill="currentColor" stroke="none" />
                <path d="M5.2 10.2 H12.8 Q11.8 13.2 9 13.2 Q6.2 13.2 5.2 10.2 Z" strokeWidth="1.2" strokeLinejoin="round" />
              </svg>
            </button>
          </div>
          <Incoming time="11:57">
            Nos meses em que você acumular um valor <b>igual ou maior</b> a <b>R$ 3.500,00</b>, você fica <b>livre da anuidade</b>.
          </Incoming>
          <ListMessage text="Escolha uma das opções:" time="11:57" />
        </div>

        <Outgoing quote="Escolha uma das opções:" time="11:58" width="w-[268px]">
          Informação de anuidade
          <br />
          Mais informações sobre anuidade
        </Outgoing>

        <ListMessage text="Qual a sua dúvida sobre anuidade?" time="11:58" />

        <Outgoing quote="Qual a sua dúvida sobre anuidade?" time="11:58" width="w-[272px]" stacked>
          Quero negociar anuidade
        </Outgoing>

        <div className="flex flex-col gap-[3px]">
          <Incoming time="11:58" tail>
            Matheus, quanto mais você usar o cartão maior é a sua chance de ter desconto ou até mesmo a isenção da anuidade.
          </Incoming>
          <Incoming time="11:58">Eu encontrei uma condição especial para você.</Incoming>
          <Incoming time="11:58">
            Eu consigo te dar <b>um ano de anuidade grátis</b>.
            <br />
            <br />
            Assim, você continua com todos os benefícos que já tem e garante um ano livre de anuidade do seu cartão.
          </Incoming>
          <div className="flex w-[314px] flex-col gap-[3px]">
            <div className="flow-root rounded-lg bg-[#242626] pt-1.5 pr-1.5 pb-[5px] pl-2 shadow-sm">
              Você aceita a isenção por 12 meses?
              <Time className="mt-[5px]">11:58</Time>
            </div>
            <button disabled className="h-8 rounded-lg bg-[#242626] pb-1 text-white/60 shadow-sm">Sim</button>
            <button className="h-8 rounded-lg bg-[#242626] pb-1 text-[#21c063] shadow-sm">Não</button>
            <button className="h-8 rounded-lg bg-[#242626] pb-1 text-[#21c063] shadow-sm">Voltar</button>
          </div>
        </div>

        <Outgoing quote="Você aceita a isenção por 12 meses?" time="11:59" width="w-[231px]" quoteSize="h-[50px] pt-[3px]" className="mt-1.5">
          Sim
        </Outgoing>
      </div>
    </main>
  )
}
